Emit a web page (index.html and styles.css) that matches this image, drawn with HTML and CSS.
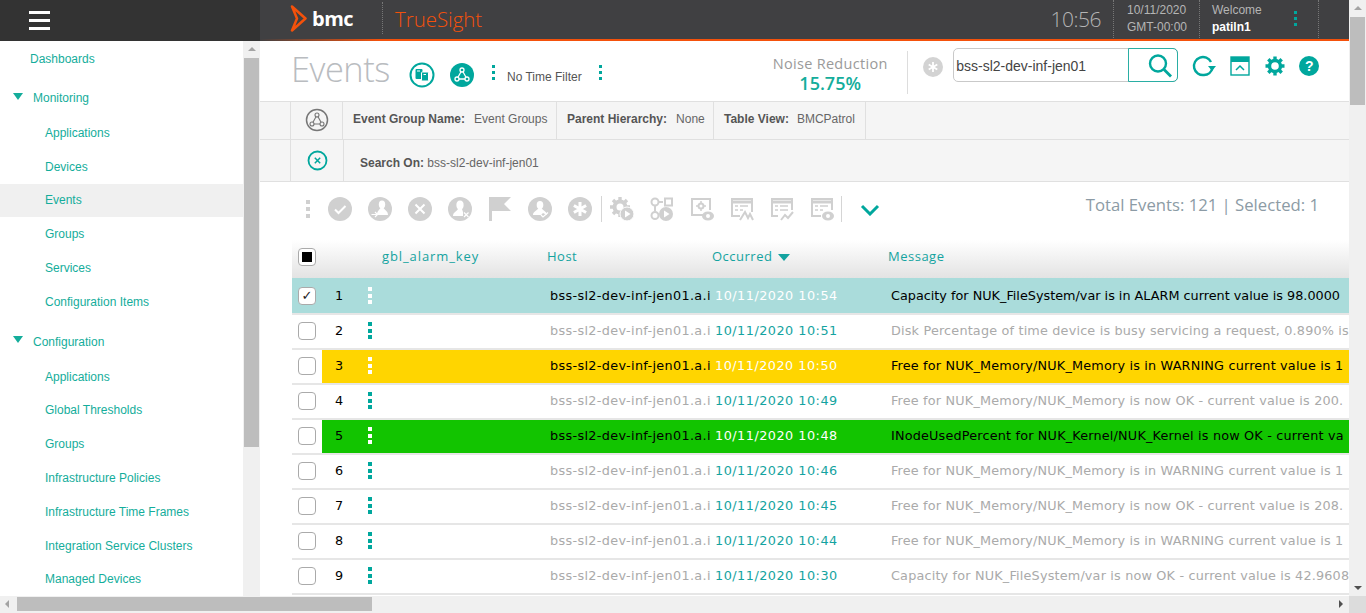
FILE: index.html
```html
<!DOCTYPE html>
<html lang="en">
<head>
  <meta charset="UTF-8" />
  <title>TrueSight - Events</title>
  <link rel="stylesheet" href="styles.css">
</head>
<body>
  <div class="page">
    <div class="upper">
      <div class="viewport">
        <header class="topbar">
          <div class="menu-zone"><span class="burger"><i></i><i></i><i></i></span></div>
          <div class="brand-zone">
            <svg class="bmc-mark" width="17" height="29" viewBox="0 0 17 29"><path d="M2 2.500 L15.500 14.500 L2 26.500 L7 14.500 Z" fill="none" stroke="#f4510b" stroke-width="2.500" stroke-linejoin="round"/></svg>
            <span class="bmc-text">bmc</span>
            <span class="truesight">TrueSight</span>
            <span class="clock">10:56</span>
            <div class="info date"><span>10/11/2020</span><span>GMT-00:00</span></div>
            <div class="info user"><span>Welcome</span><b>patiln1</b></div>
            <span class="kebab top-kebab"><i></i><i></i><i></i></span>
            <span class="end-dots"></span>
          </div>
        </header>
        <div class="body">
          <nav class="sidebar">
            <a class="item first">Dashboards</a>
            <a class="group"><span class="tri"></span>Monitoring</a>
            <a class="item sub">Applications</a>
            <a class="item sub">Devices</a>
            <a class="item sub active">Events</a>
            <a class="item sub">Groups</a>
            <a class="item sub">Services</a>
            <a class="item sub">Configuration Items</a>
            <a class="group"><span class="tri"></span>Configuration</a>
            <a class="item sub">Applications</a>
            <a class="item sub">Global Thresholds</a>
            <a class="item sub">Groups</a>
            <a class="item sub">Infrastructure Policies</a>
            <a class="item sub">Infrastructure Time Frames</a>
            <a class="item sub">Integration Service Clusters</a>
            <a class="item sub">Managed Devices</a>
          </nav>
          <div class="side-scroll">
            <span class="arrow up"></span>
            <span class="side-thumb"></span>
          </div>
          <main class="main">
            <section class="title-row">
              <h1>Events</h1>
              <svg class="ic-a" width="26" height="26" viewBox="0 0 26 26"><circle cx="13" cy="13" r="11.500" fill="none" stroke="#00a79d" stroke-width="2"/><rect x="6.500" y="7" width="7" height="10" rx="1" fill="#00a79d"/><rect x="12.500" y="10" width="7" height="9" rx="1" fill="#00a79d" stroke="#fff"/><path d="M8 9 H11 M14.500 12.500 H17" stroke="#fff"/></svg>
              <svg class="ic-b" width="26" height="26" viewBox="0 0 26 26"><circle cx="13" cy="13" r="12" fill="#00a79d"/><path d="M13 8 L8 17 H18 Z" fill="none" stroke="#fff" stroke-width="1.300"/><circle cx="13" cy="8" r="2" fill="#00a79d" stroke="#fff" stroke-width="1.300"/><circle cx="8" cy="17" r="2" fill="#00a79d" stroke="#fff" stroke-width="1.300"/><circle cx="18" cy="17" r="2" fill="#00a79d" stroke="#fff" stroke-width="1.300"/></svg>
              <span class="kebab k1"><i></i><i></i><i></i></span>
              <span class="no-filter">No Time Filter</span>
              <span class="kebab k2"><i></i><i></i><i></i></span>
              <div class="noise"><span>Noise Reduction</span><b>15.75%</b></div>
              <span class="vsep"></span>
              <svg class="star" width="20" height="20" viewBox="0 0 20 20"><circle cx="10" cy="10" r="10" fill="#d3d3d3"/><path d="M10 5 V15 M5.700 7.500 L14.300 12.500 M14.300 7.500 L5.700 12.500" stroke="#fff" stroke-width="1.800"/></svg>
              <div class="search">
                <span class="search-text">bss-sl2-dev-inf-jen01</span>
                <span class="search-btn"><svg width="26" height="26" viewBox="0 0 26 26"><circle cx="11" cy="10.500" r="8" fill="none" stroke="#00a79d" stroke-width="2.400"/><path d="M17 16.500 L24 23.500" stroke="#00a79d" stroke-width="2.800"/></svg></span>
              </div>
              <svg class="ic-refresh" width="24" height="24" viewBox="0 0 24 24"><path d="M19 8 A9 9 0 1 0 12 21 A9 9 0 0 0 20.500 14" fill="none" stroke="#00a79d" stroke-width="2.400"/><path d="M16 12 H24 L20 17 Z" fill="#00a79d"/></svg>
              <svg class="ic-panel" width="20" height="20" viewBox="0 0 20 20"><rect x="1" y="1" width="18" height="18" fill="none" stroke="#00a79d" stroke-width="1.400"/><rect x="1" y="1" width="18" height="5" fill="#00a79d"/><path d="M6 14 L10 10 L14 14" fill="none" stroke="#00a79d" stroke-width="1.500"/></svg>
              <svg class="ic-gear" width="20" height="20" viewBox="0 0 20 20"><circle cx="10" cy="10" r="5.500" fill="none" stroke="#00a79d" stroke-width="3.400"/><path d="M10 0.500 V4 M10 16 V19.500 M0.500 10 H4 M16 10 H19.500 M3.300 3.300 L5.800 5.800 M14.200 14.200 L16.700 16.700 M16.700 3.300 L14.200 5.800 M5.800 14.200 L3.300 16.700" stroke="#00a79d" stroke-width="3.400"/></svg>
              <span class="help">?</span>
            </section>

            <section class="filter-row one">
              <span class="cell blank"></span>
              <span class="cell icon-cell"><svg width="24" height="24" viewBox="0 0 24 24"><circle cx="12" cy="12" r="10.500" fill="none" stroke="#777" stroke-width="1.500"/><path d="M12 7 L7 16 H17 Z" fill="none" stroke="#777" stroke-width="1.100"/><circle cx="12" cy="7" r="2" fill="#f5f5f5" stroke="#777" stroke-width="1.100"/><circle cx="7" cy="16" r="2" fill="#f5f5f5" stroke="#777" stroke-width="1.100"/><circle cx="17" cy="16" r="2" fill="#f5f5f5" stroke="#777" stroke-width="1.100"/></svg></span>
              <span class="cell txt group-name"><b>Event Group Name:</b><em>Event Groups</em></span>
              <span class="cell txt parent"><b>Parent Hierarchy:</b><em>None</em></span>
              <span class="cell txt table-view"><b>Table View:</b><em>BMCPatrol</em></span>
            </section>
            <section class="filter-row two">
              <span class="cell blank"></span>
              <span class="cell icon-cell wide"><svg width="21" height="21" viewBox="0 0 21 21"><circle cx="10.500" cy="10.500" r="9" fill="none" stroke="#00a79d" stroke-width="1.800"/><path d="M7.800 7.800 L13.200 13.200 M13.200 7.800 L7.800 13.200" stroke="#00a79d" stroke-width="1.500"/></svg></span>
              <span class="search-on"><b>Search On:</b> bss-sl2-dev-inf-jen01</span>
            </section>

            <section class="toolbar">
              <span class="kebab grey"><i></i><i></i><i></i></span>
              <svg class="tool" viewBox="0 0 24 24"><circle cx="12" cy="12" r="12"/><path d="M7 12.500 L10.500 16 L17.500 9" fill="none" stroke="#fff" stroke-width="2"/></svg>
              <svg class="tool" viewBox="0 0 24 24"><circle cx="12" cy="12" r="12"/><ellipse cx="14" cy="7.500" rx="3.200" ry="4" fill="#fff"/><path d="M9 18 C9 14 11 13.500 12.500 11 H15.500 C17 13.500 20 14 20 18 Z" fill="#fff"/><path d="M3.500 17.500 H9 M7 15 L9.500 17.500 L7 20" fill="none" stroke="#fff" stroke-width="1.200"/></svg>
              <svg class="tool" viewBox="0 0 24 24"><circle cx="12" cy="12" r="12"/><path d="M7.500 7.500 L16.500 16.500 M16.500 7.500 L7.500 16.500" stroke="#fff" stroke-width="2"/></svg>
              <svg class="tool" viewBox="0 0 24 24"><circle cx="12" cy="12" r="12"/><ellipse cx="12" cy="8" rx="3.600" ry="4.500" fill="#fff"/><path d="M5 19 C5 15 9 14.500 10 12 H14 L15 15 V19 Z" fill="#fff"/><path d="M16 15.500 L20.500 20 M20.500 15.500 L16 20" stroke="#fff" stroke-width="1.200"/></svg>
              <svg class="tool" viewBox="0 0 24 24"><path d="M1 0 H4 V24 H1 Z M4 0 H23 L16 7 L23 14 H4 Z"/></svg>
              <svg class="tool" viewBox="0 0 24 24"><circle cx="12" cy="12" r="12"/><ellipse cx="12" cy="8" rx="3.300" ry="4" fill="#fff"/><path d="M5 18 C5 14.500 9 14 10.500 11 H13.500 C15 14 19 14.500 19 18 L15 16 L13 18 Z" fill="#fff"/><path d="M13 18 L15 20 L20 15.500" fill="none" stroke="#fff" stroke-width="1.200"/></svg>
              <svg class="tool" viewBox="0 0 24 24"><circle cx="12" cy="12" r="12"/><path d="M12 5 V19 M5.900 8.500 L18.100 15.500 M18.100 8.500 L5.900 15.500" stroke="#fff" stroke-width="3"/></svg>
              <span class="tool-sep s1"></span>
              <svg class="tool after-sep" viewBox="0 0 24 24"><circle cx="10" cy="10" r="5.500" fill="none" stroke="#d0d0d0" stroke-width="4"/><path d="M10 0 V4 M10 16 V20 M0 10 H4 M16 10 H20 M3 3 L5.500 5.500 M14.500 14.500 L17 17 M17 3 L14.500 5.500 M5.500 14.500 L3 17" stroke="#d0d0d0" stroke-width="3.400"/><circle cx="17" cy="17" r="7" stroke="#fff"/><path d="M15 13.500 L20.500 17 L15 20.500 Z" fill="#fff"/></svg>
              <svg class="tool" viewBox="0 0 24 24"><circle cx="5" cy="5" r="3.500" fill="none" stroke="#d0d0d0" stroke-width="2"/><rect x="15" y="1.500" width="7" height="7" fill="none" stroke="#d0d0d0" stroke-width="2"/><path d="M8.500 5 H13" stroke="#d0d0d0" stroke-width="2"/><path d="M5 8.500 V14" stroke="#d0d0d0" stroke-width="2"/><circle cx="5" cy="18.500" r="3.500" fill="none" stroke="#d0d0d0" stroke-width="2"/><circle cx="16" cy="17" r="7"/><path d="M14 13.500 L19.500 17 L14 20.500 Z" fill="#fff"/></svg>
              <svg class="tool" viewBox="0 0 24 24"><path d="M14 18 H2 V2 H20 V13" fill="none" stroke="#d0d0d0" stroke-width="2"/><circle cx="11" cy="9" r="2.500" fill="none" stroke="#d0d0d0" stroke-width="2"/><path d="M11 4 V6 M11 12 V14 M6 9 H8 M14 9 H16" stroke="#d0d0d0" stroke-width="1.500"/><ellipse cx="18" cy="19" rx="6" ry="4.500"/><circle cx="18" cy="19" r="2" fill="#fff"/></svg>
              <svg class="tool" viewBox="0 0 24 24"><path d="M10 19 H2 V2 H22 V15" fill="none" stroke="#d0d0d0" stroke-width="2"/><path d="M1 5 H23" stroke="#d0d0d0" stroke-width="3"/><path d="M5 9 H8 M10 9 H18 M5 13 H8 M10 13 H13" stroke="#d0d0d0" stroke-width="1.500"/><path d="M10 23 L15 15 L18 21 L20 17 L23 23" fill="none" stroke="#d0d0d0" stroke-width="2"/></svg>
              <svg class="tool" viewBox="0 0 24 24"><path d="M8 19 H2 V2 H22 V13" fill="none" stroke="#d0d0d0" stroke-width="2"/><path d="M1 5 H23" stroke="#d0d0d0" stroke-width="3"/><path d="M5 9 H8 M10 9 H18 M5 13 H8 M10 13 H18" stroke="#d0d0d0" stroke-width="1.500"/><path d="M11 23 L15 18 L18 21 L23 15" fill="none" stroke="#d0d0d0" stroke-width="2"/></svg>
              <svg class="tool" viewBox="0 0 24 24"><path d="M11 19 H2 V2 H22 V13" fill="none" stroke="#d0d0d0" stroke-width="2"/><path d="M1 5 H23" stroke="#d0d0d0" stroke-width="3"/><path d="M5 9 H8 M10 9 H18 M5 13 H8 M10 13 H13" stroke="#d0d0d0" stroke-width="1.500"/><ellipse cx="18" cy="19" rx="6" ry="4.500"/><circle cx="18" cy="19" r="2" fill="#fff"/></svg>
              <span class="tool-sep s2"></span>
              <svg class="chevron" width="20" height="12" viewBox="0 0 20 12"><path d="M2 2 L10 10 L18 2" fill="none" stroke="#00a79d" stroke-width="3"/></svg>
              <span class="totals">Total Events: 121 | Selected: 1</span>
            </section>

            <section class="table">
              <div class="thead tgrid">
                <span class="box partial"><i></i></span>
                <span></span>
                <span class="key-head">gbl_alarm_key</span>
                <span>Host</span>
                <span class="sorted">Occurred <u></u></span>
                <span>Message</span>
              </div>
              <div class="row tgrid selected">
                <span class="box checked">&#10003;</span>
                <span class="num"><span>1</span><span class="kebab white"><i></i><i></i><i></i></span></span>
                <span></span>
                <span class="host">bss-sl2-dev-inf-jen01.a.i</span>
                <span class="when">10/11/2020 10:54</span>
                <span class="msg">Capacity for NUK_FileSystem/var is in ALARM current value is 98.0000</span>
              </div>
              <div class="row tgrid">
                <span class="box"></span>
                <span class="num"><span>2</span><span class="kebab"><i></i><i></i><i></i></span></span>
                <span></span>
                <span class="host">bss-sl2-dev-inf-jen01.a.i</span>
                <span class="when">10/11/2020 10:51</span>
                <span class="msg">Disk Percentage of time device is busy servicing a request, 0.890% is</span>
              </div>
              <div class="row tgrid warning">
                <span class="box"></span>
                <span class="num"><span>3</span><span class="kebab white"><i></i><i></i><i></i></span></span>
                <span></span>
                <span class="host">bss-sl2-dev-inf-jen01.a.i</span>
                <span class="when">10/11/2020 10:50</span>
                <span class="msg">Free for NUK_Memory/NUK_Memory is in WARNING current value is 1</span>
              </div>
              <div class="row tgrid">
                <span class="box"></span>
                <span class="num"><span>4</span><span class="kebab"><i></i><i></i><i></i></span></span>
                <span></span>
                <span class="host">bss-sl2-dev-inf-jen01.a.i</span>
                <span class="when">10/11/2020 10:49</span>
                <span class="msg">Free for NUK_Memory/NUK_Memory is now OK - current value is 200.</span>
              </div>
              <div class="row tgrid ok">
                <span class="box"></span>
                <span class="num"><span>5</span><span class="kebab white"><i></i><i></i><i></i></span></span>
                <span></span>
                <span class="host">bss-sl2-dev-inf-jen01.a.i</span>
                <span class="when">10/11/2020 10:48</span>
                <span class="msg">INodeUsedPercent for NUK_Kernel/NUK_Kernel is now OK - current va</span>
              </div>
              <div class="row tgrid">
                <span class="box"></span>
                <span class="num"><span>6</span><span class="kebab"><i></i><i></i><i></i></span></span>
                <span></span>
                <span class="host">bss-sl2-dev-inf-jen01.a.i</span>
                <span class="when">10/11/2020 10:46</span>
                <span class="msg">Free for NUK_Memory/NUK_Memory is in WARNING current value is 1</span>
              </div>
              <div class="row tgrid">
                <span class="box"></span>
                <span class="num"><span>7</span><span class="kebab"><i></i><i></i><i></i></span></span>
                <span></span>
                <span class="host">bss-sl2-dev-inf-jen01.a.i</span>
                <span class="when">10/11/2020 10:45</span>
                <span class="msg">Free for NUK_Memory/NUK_Memory is now OK - current value is 208.</span>
              </div>
              <div class="row tgrid">
                <span class="box"></span>
                <span class="num"><span>8</span><span class="kebab"><i></i><i></i><i></i></span></span>
                <span></span>
                <span class="host">bss-sl2-dev-inf-jen01.a.i</span>
                <span class="when">10/11/2020 10:44</span>
                <span class="msg">Free for NUK_Memory/NUK_Memory is in WARNING current value is 1</span>
              </div>
              <div class="row tgrid">
                <span class="box"></span>
                <span class="num"><span>9</span><span class="kebab"><i></i><i></i><i></i></span></span>
                <span></span>
                <span class="host">bss-sl2-dev-inf-jen01.a.i</span>
                <span class="when">10/11/2020 10:30</span>
                <span class="msg">Capacity for NUK_FileSystem/var is now OK - current value is 42.9608</span>
              </div>
            </section>
          </main>
        </div>
      </div>
      <div class="page-scroll">
        <span class="arrow up"></span>
        <span class="page-thumb"></span>
        <span class="arrow down"></span>
      </div>
    </div>
    <div class="bottom-scroll">
      <span class="arrow left"></span>
      <span class="bottom-thumb"></span>
      <span class="arrow right"></span>
      <span class="corner"></span>
    </div>
  </div>
</body>
</html>
```

FILE: styles.css
```css
* {
  box-sizing: border-box;
}
html, body {
  margin: 0;
  height: 100%;
  overflow: hidden;
}
body {
  font-family: "Liberation Sans", Arial, sans-serif;
  font-size: 12px;
  color: #555;
  background: #fff;
}
.page {
  width: 1366px;
  height: 613px;
  display: flex;
  flex-direction: column;
}
.upper {
  display: flex;
  height: 596px;
}
.viewport {
  width: 1349px;
  display: flex;
  flex-direction: column;
  overflow: hidden;
}

/* top bar */
.topbar {
  display: flex;
  height: 41px;
  flex: none;
}
.menu-zone {
  width: 260px;
  background: #333;
  padding: 11px 0 0 29px;
}
.burger {
  display: flex;
  flex-direction: column;
  gap: 5px;
  width: 21px;
}
.burger i {
  display: block;
  height: 3px;
  background: #fff;
}
.brand-zone {
  flex: 1;
  display: flex;
  align-items: center;
  position: relative;
  height: 41px;
  padding: 0 30px 2px 30px;
  background: #404042;
  border-bottom: 2px solid #f4510b;
  border-image: linear-gradient(90deg, #404042, #f4510b 120px, #f4510b) 1;
}
.bmc-text {
  font-family: "Open Sans", sans-serif;
  font-size: 20px;
  font-weight: 700;
  color: #fff;
  margin-left: 5px;
  letter-spacing: -0.5px;
}
.truesight {
  font-family: "Open Sans", sans-serif;
  font-size: 20.4px;
  font-weight: 300;
  color: #f4510b;
  margin-left: 42px;
  padding-left: 0;
  position: relative;
}
.truesight::before {
  content: "";
  position: absolute;
  left: -13px;
  top: -3px;
  bottom: -1px;
  border-left: 1px dotted #777;
}
.clock {
  font-family: "Open Sans", sans-serif;
  font-weight: 300;
  font-size: 21px;
  color: #b5b5b5;
  margin-left: auto;
  margin-right: 12px;
  letter-spacing: -0.5px;
}
.info {
  height: 38px;
  border-left: 1px dotted #777;
  display: flex;
  flex-direction: column;
  gap: 3px;
  justify-content: center;
  color: #b5b5b5;
  font-size: 12px;
}
.date {
  width: 86px;
  padding-left: 13px;
}
.user {
  width: 72px;
  padding-left: 12px;
}
.user b {
  color: #fff;
  font-weight: bold;
}
.top-kebab {
  margin-left: 23px;
  margin-right: 21px;
}
.end-dots {
  height: 38px;
  border-left: 1px dotted #777;
}
.kebab {
  display: inline-flex;
  flex-direction: column;
  gap: 3px;
  width: 3px;
  flex: none;
}
.kebab i {
  display: block;
  width: 3px;
  height: 3px;
  background: #00a79d;
}
.num .kebab {
  width: 4px;
  gap: 2.5px;
}
.num .kebab i {
  width: 4px;
  height: 4px;
}
.kebab.white i {
  background: #fff;
}
.kebab.grey {
  width: 4px;
  gap: 3px;
}
.kebab.grey i {
  width: 4px;
  height: 4px;
  background: #d0d0d0;
}

/* sidebar */
.body {
  display: flex;
  flex: 1;
  min-height: 0;
}
.sidebar {
  width: 243px;
  flex: none;
  overflow: hidden;
  padding-top: 1px;
}
.sidebar a {
  display: flex;
  align-items: center;
  color: #14ad9b;
  font-size: 12px;
}
.item {
  height: 33.8px;
}
.first {
  height: 34px;
  padding-left: 30px;
}
.sub {
  padding-left: 45px;
}
.active {
  background: #f0f0f0;
  color: #14ad9b;
}
.group {
  height: 34px;
  margin-top: 5px;
  margin-bottom: 1px;
  padding-left: 13px;
}
.item + .group:not(:nth-child(2)) {
  margin-top: 6px;
}
.tri {
  width: 0;
  height: 0;
  border-left: 5px solid transparent;
  border-right: 5px solid transparent;
  border-top: 7px solid #14ad9b;
  margin-right: 10px;
  margin-top: -4px;
}
.side-scroll {
  width: 17px;
  flex: none;
  background: #f0f0f0;
  position: relative;
}
.side-thumb {
  position: absolute;
  top: 17px;
  left: 1px;
  width: 15px;
  height: 389px;
  background: #bdbdbd;
}
.page-scroll {
  width: 17px;
  background: #f0f0f0;
  position: relative;
}
.page-thumb {
  position: absolute;
  top: 17px;
  left: 1px;
  width: 15px;
  height: 88px;
  background: #bdbdbd;
}
.arrow {
  position: absolute;
  width: 0;
  height: 0;
}
.arrow.up {
  top: 6px;
  left: 5px;
  border-left: 4px solid transparent;
  border-right: 4px solid transparent;
  border-bottom: 4px solid #a3a3a3;
}
.arrow.down {
  bottom: 6px;
  left: 5px;
  border-left: 4px solid transparent;
  border-right: 4px solid transparent;
  border-top: 4px solid #505050;
}
.bottom-scroll {
  height: 17px;
  background: #f0f0f0;
  position: relative;
}
.bottom-thumb {
  position: absolute;
  left: 17px;
  top: 1px;
  width: 355px;
  height: 14px;
  background: #bdbdbd;
}
.arrow.left {
  left: 5px;
  top: 4px;
  border-top: 4px solid transparent;
  border-bottom: 4px solid transparent;
  border-right: 4px solid #a3a3a3;
}
.arrow.right {
  left: 1339px;
  top: 4px;
  border-top: 4px solid transparent;
  border-bottom: 4px solid transparent;
  border-left: 4px solid #505050;
}
.corner {
  position: absolute;
  right: 0;
  top: 0;
  width: 17px;
  height: 17px;
  background: #dcdcdc;
}

/* main */
.main {
  flex: 1;
  min-width: 0;
  overflow: hidden;
}
.title-row {
  display: flex;
  align-items: center;
  height: 60px;
  padding-left: 31px;
}
.title-row h1 {
  margin: 0;
  width: 118px;
  font-family: "Open Sans", sans-serif;
  font-weight: 300;
  font-size: 34.5px;
  color: #b9bcc0;
  letter-spacing: -0.5px;
  position: relative;
  top: -3px;
}
.ic-a, .ic-b {
  position: relative;
  top: 4px;
}
.ic-b {
  margin-left: 14px;
}
.k1 {
  margin-left: 17px;
  margin-top: 3px;
}
.no-filter {
  margin-left: 12px;
  margin-top: 12px;
  color: #555;
}
.k2 {
  margin-left: 17px;
  margin-top: 3px;
}
.noise {
  width: 140px;
  margin-left: 158.5px;
  text-align: center;
  display: flex;
  flex-direction: column;
  font-family: "Open Sans", sans-serif;
  position: relative;
  top: 3px;
}
.noise span {
  color: #9a9a9a;
  font-size: 14.5px;
  line-height: 18px;
  letter-spacing: 0.3px;
}
.noise b {
  color: #14ad9b;
  font-size: 18px;
  line-height: 20px;
  font-weight: 600;
}
.vsep {
  width: 1px;
  height: 43px;
  background: #ddd;
  margin-left: 7px;
  position: relative;
  top: 1px;
}
.star {
  margin-left: 15px;
  position: relative;
  top: -4px;
}
.search {
  display: flex;
  width: 225px;
  height: 34px;
  margin-left: 10px;
  border: 1px solid #c9c9c9;
  border-radius: 5px;
  position: relative;
  top: -6px;
}
.search-text {
  flex: 1;
  font-size: 14px;
  color: #444;
  padding: 9px 0 0 2px;
}
.search-btn {
  width: 50px;
  margin: -1px -1px -1px 0;
  border: 1px solid #2aaea4;
  border-radius: 0 5px 5px 0;
  padding: 4px 0 0 18px;
}
.ic-refresh {
  margin-left: 14px;
  position: relative;
  top: -5px;
}
.ic-panel {
  margin-left: 14px;
  position: relative;
  top: -5px;
}
.ic-gear {
  margin-left: 15px;
  position: relative;
  top: -5px;
}
.help {
  width: 20px;
  height: 20px;
  margin-left: 14px;
  border-radius: 50%;
  background: #00a79d;
  color: #fff;
  font-weight: bold;
  font-size: 14px;
  text-align: center;
  line-height: 20px;
  position: relative;
  top: -5px;
}

/* filter rows */
.filter-row {
  display: flex;
  background: #f5f5f5;
  border-top: 1px solid #e0e0e0;
}
.filter-row.one {
  height: 38px;
}
.filter-row.two {
  height: 43px;
  border-bottom: 1px solid #e0e0e0;
}
.cell {
  display: flex;
  align-items: center;
  border-right: 1px solid #e0e0e0;
  height: 100%;
}
.blank {
  width: 31px;
}
.icon-cell {
  width: 52px;
  justify-content: center;
  padding-bottom: 2px;
}
.icon-cell.wide {
  width: 53px;
  align-items: flex-start;
  padding-top: 10px;
}
.txt {
  padding: 0 0 3px 10px;
  gap: 9px;
  font-size: 12px;
}
.group-name {
  width: 214px;
}
.parent {
  width: 157px;
  gap: 9px;
}
.table-view {
  width: 152px;
  gap: 8px;
}
.txt b {
  color: #555;
}
.txt em {
  font-style: normal;
  color: #666;
}
.search-on {
  padding: 16px 0 0 16px;
  font-size: 12px;
  color: #666;
}
.search-on b {
  color: #555;
}

/* toolbar */
.toolbar {
  height: 58px;
  display: flex;
  align-items: center;
  padding: 0 0 5px 46px;
}
.tool {
  width: 24px;
  height: 24px;
  fill: #d0d0d0;
  margin-left: 16px;
  flex: none;
}
.kebab.grey + .tool {
  margin-left: 18px;
}
.tool-sep {
  width: 1px;
  height: 26px;
  background: #d5d5d5;
  margin-left: 9px;
}
.tool.after-sep {
  margin-left: 8px;
}
.tool-sep.s2 {
  margin-left: 7px;
}
.chevron {
  margin-left: 18px;
  margin-top: 2px;
}
.totals {
  margin-left: auto;
  margin-right: 30px;
  font-family: "Open Sans", sans-serif;
  font-size: 16.7px;
  color: #8c9ba5;
  position: relative;
  top: -4px;
}

/* table */
.table {
  margin-left: 32px;
  font-family: "DejaVu Sans", Verdana, sans-serif;
}
.tgrid {
  display: grid;
  grid-template-columns: 30px 60px 165px 165px 176px 1fr;
  align-items: center;
  white-space: nowrap;
}
.tgrid > * {
  overflow: hidden;
}
.thead {
  height: 38px;
  padding-bottom: 4px;
  color: #14a3a0;
  font-size: 13px;
  font-family: "Open Sans", sans-serif;
  letter-spacing: 0.5px;
  background: linear-gradient(#fff, #e3e3e3);
}
.thead > span:not(.box) {
  padding-bottom: 3px;
}
.key-head {
  letter-spacing: 0.9px;
}
.sorted u {
  display: inline-block;
  width: 0;
  height: 0;
  margin-left: 2px;
  border-left: 6px solid transparent;
  border-right: 6px solid transparent;
  border-top: 7px solid #14a3a0;
}
.box {
  width: 18px;
  height: 18px;
  margin-left: 6px;
  border: 1px solid #aaa;
  border-radius: 4px;
  background: #fff;
  display: flex;
  align-items: center;
  justify-content: center;
  color: #222;
  font-size: 13px;
}
.partial i {
  display: block;
  width: 10px;
  height: 10px;
  background: #000;
}
.row {
  height: 35px;
  padding-bottom: 2px;
  border-bottom: 2px solid #e6e6e6;
  font-size: 12.8px;
  color: #aaa;
  background: linear-gradient(90deg, #fff 30px, transparent 30px);
}
.num {
  display: flex;
  align-items: center;
  padding-left: 13px;
  color: #000;
  gap: 25px;
}
.host {
  padding-left: 3px;
  letter-spacing: 0.34px;
}
.msg {
  padding-left: 3px;
  letter-spacing: 0.18px;
}
.selected .msg {
  letter-spacing: 0;
}
.when {
  padding-left: 3px;
  letter-spacing: 0.5px;
  color: #14a3a0;
}
.selected {
  background: #aadcdb;
  height: 37px;
  padding-bottom: 0;
}
.warning {
  background: linear-gradient(90deg, #fff 30px, #ffd500 30px);
}
.ok {
  background: linear-gradient(90deg, #fff 30px, #12c400 30px);
}
.selected .host, .selected .msg,
.warning .host, .warning .msg,
.ok .host, .ok .msg {
  color: #000;
}
.selected .when, .warning .when, .ok .when {
  color: #fff;
}
```
